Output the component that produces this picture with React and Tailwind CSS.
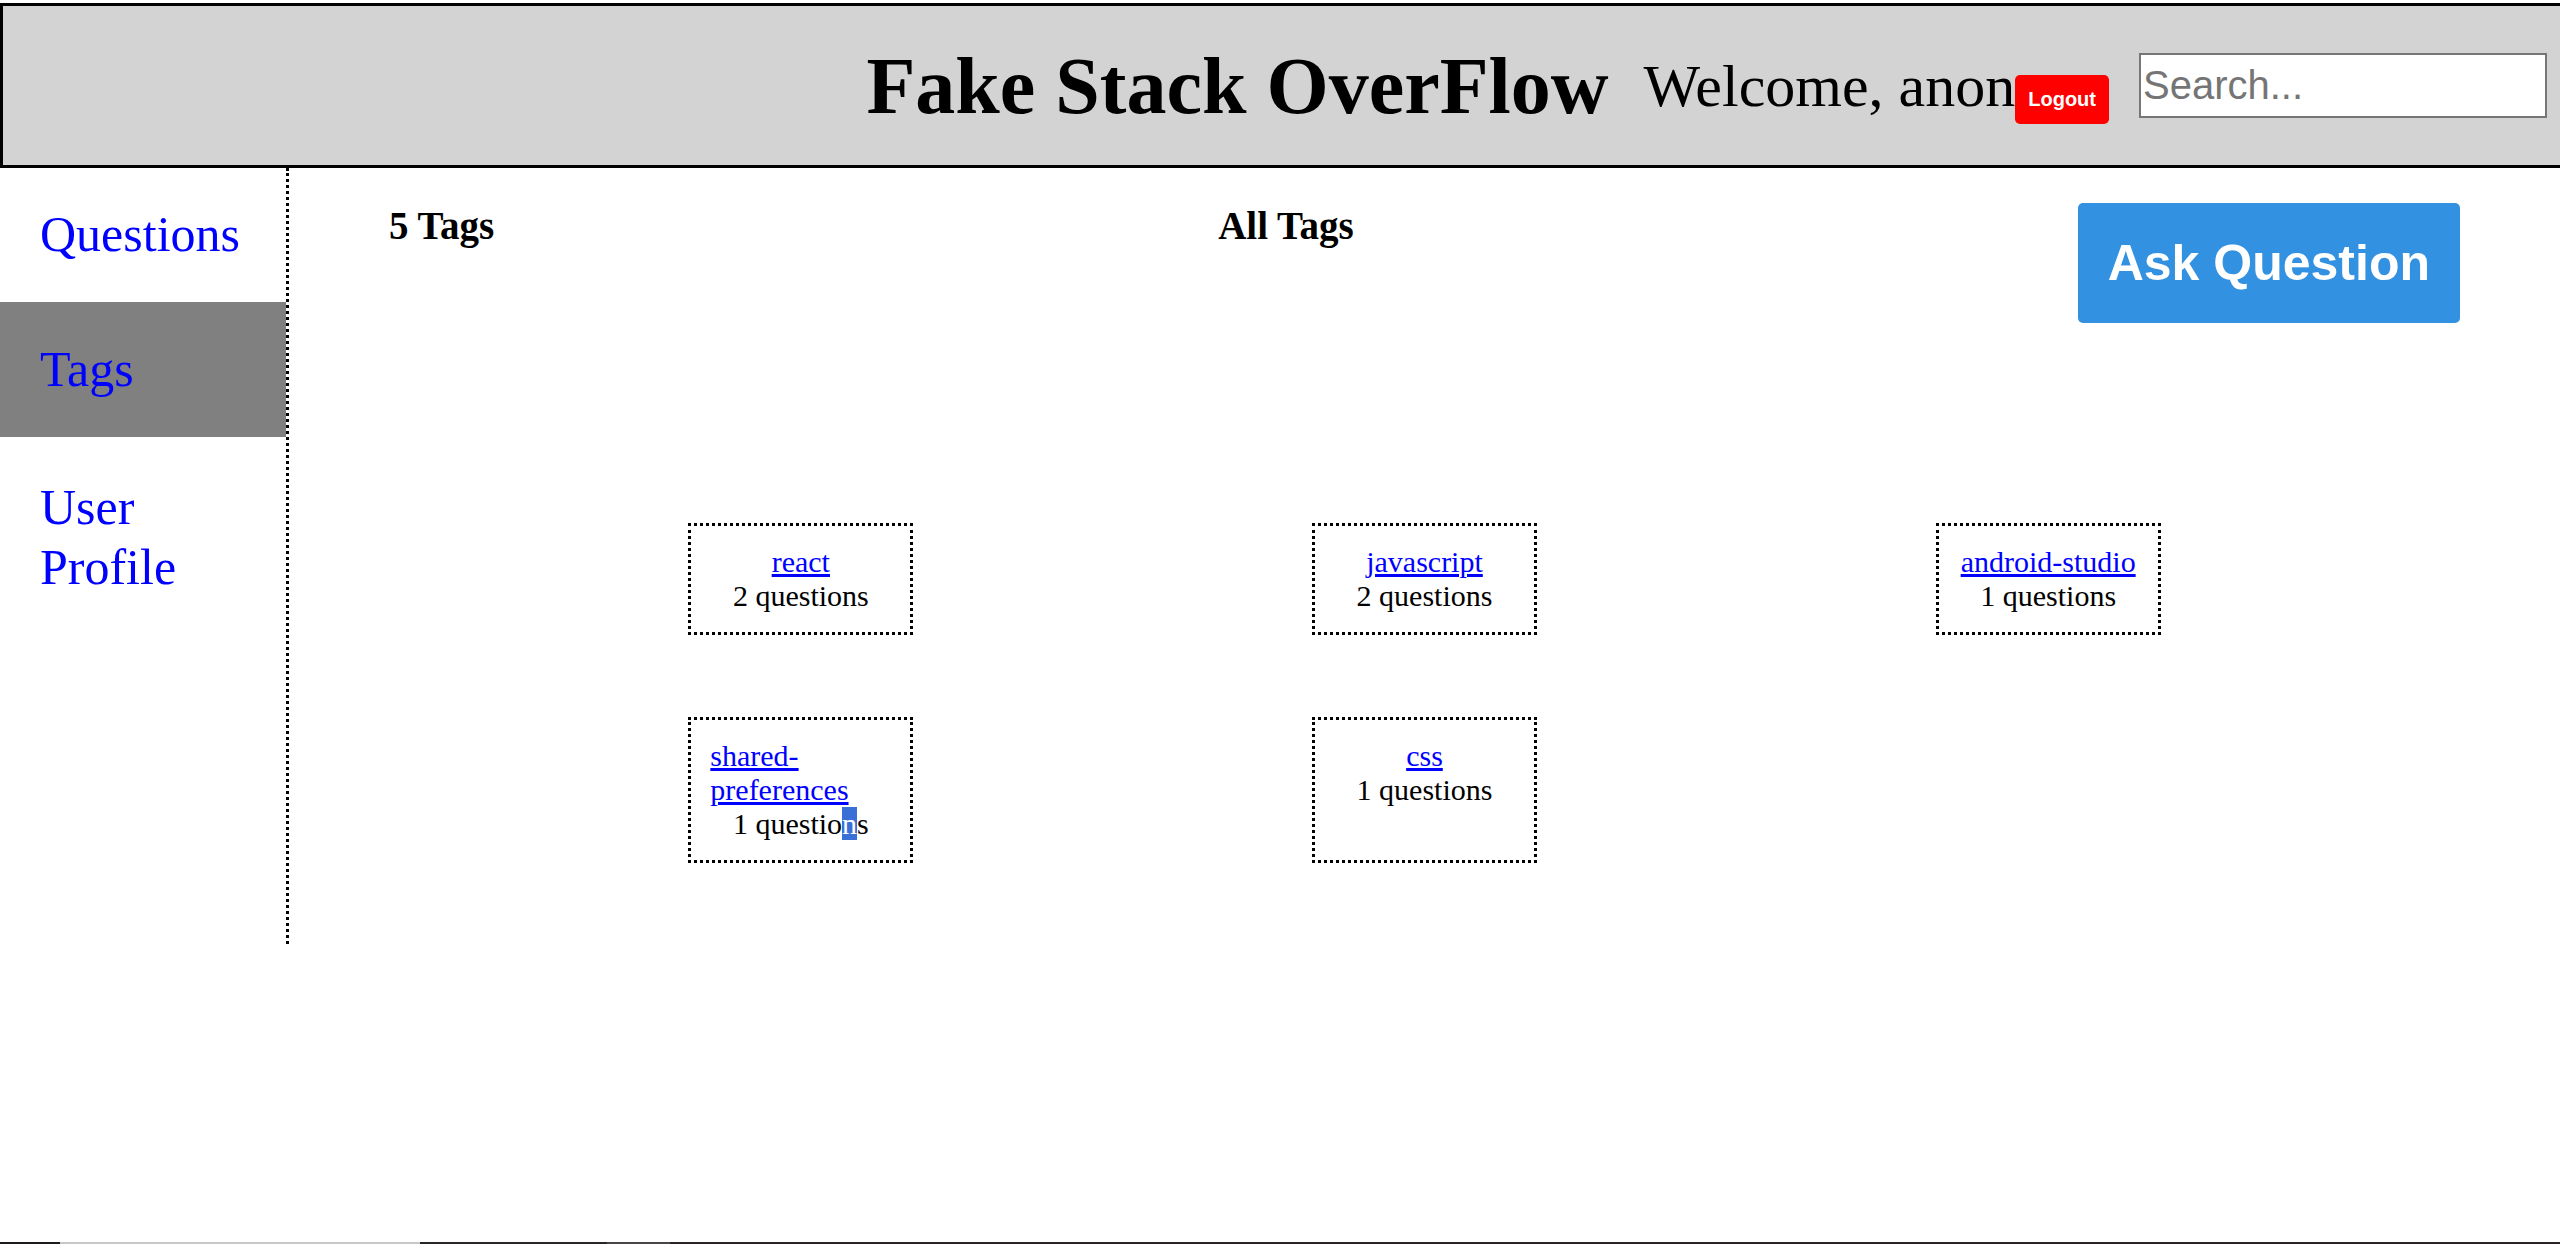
const tags = [
  { name: "react", count: 2 },
  { name: "javascript", count: 2 },
  { name: "android-studio", count: 1 },
  { name: "shared-preferences", count: 1, selected: true },
  { name: "css", count: 1 },
];

const navItems = [
  { label: "Questions", cls: "pt-[36px] pb-[38px]" },
  { label: "Tags", cls: "pt-[37px] pb-[38px] bg-[#808080]" },
  { label: "User Profile", cls: "pt-[40px] pb-[38px]" },
];

function Header() {
  return (
    <div className="mt-[3px] h-[165px] border-[3px] border-r-0 border-black bg-[#d3d3d3] flex items-center justify-end pr-[13px]">
      <h1 className="text-[80px] font-bold text-black mr-[35px] leading-none">Fake Stack OverFlow</h1>
      <div className="text-[60px] text-black whitespace-nowrap">
        Welcome, anon
        <button className="bg-[#ff0000] text-white font-['Liberation_Sans',Arial,sans-serif] font-bold text-[20px] leading-[23px] px-[13px] py-[13px] rounded-[5px] align-baseline">
          Logout
        </button>
      </div>
      <input
        type="text"
        placeholder="Search..."
        className="ml-[30px] w-[408px] h-[65px] bg-white border-2 border-[#767676] px-[2px] text-[40px] font-['Liberation_Sans',Arial,sans-serif] placeholder:text-[#757575] outline-none"
      />
    </div>
  );
}

function Sidebar() {
  return (
    <div className="w-[289px] h-[776px] shrink-0 border-r-[3px] border-dotted border-black">
      {navItems.map((item) => (
        <div
          key={item.label}
          className={`pl-[40px] pr-[40px] text-[50px] leading-[60px] text-[#0000ff] ${item.cls}`}
        >
          {item.label}
        </div>
      ))}
    </div>
  );
}

function TagCard({ tag }) {
  return (
    <div className="w-[225px] justify-self-center border-[3px] border-dotted border-black p-[19px] flex flex-col items-center text-[30px] leading-[34px]">
      <a href="#" className="text-[#0000ff] underline">{tag.name}</a>
      {tag.selected ? (
        <div className="text-black">
          {tag.count} questio<span className="bg-[#3a6fd8] text-white">n</span>s
        </div>
      ) : (
        <div className="text-black">{tag.count} questions</div>
      )}
    </div>
  );
}

export default function App() {
  return (
    <div className="min-h-screen flex flex-col overflow-hidden bg-white font-['Liberation_Serif','Times_New_Roman',serif]">
      <Header />
      <div className="flex">
        <Sidebar />
        <div className="flex-1">
          <div className="flex justify-between items-start px-[100px] pt-[35px]">
            <h2 className="text-[39px] font-bold leading-[46px]">5 Tags</h2>
            <h2 className="text-[39px] font-bold leading-[46px]">All Tags</h2>
            <button className="bg-[#3391e1] text-white font-['Liberation_Sans',Arial,sans-serif] font-bold text-[50px] leading-[58px] px-[30px] py-[31px] rounded-[5px]">
              Ask Question
            </button>
          </div>
          <div className="mt-[200px] px-[200px] grid grid-cols-3 gap-y-[82px]">
            {tags.map((t) => (
              <TagCard key={t.name} tag={t} />
            ))}
          </div>
        </div>
      </div>
      <div className="mt-auto h-[2px] flex">
        <div className="w-[60px] bg-[#1e1a1a]" />
        <div className="w-[360px] bg-[#c8c8c8]" />
        <div className="w-[187px] bg-[#2a2626]" />
        <div className="w-[63px] bg-[#4a4646]" />
        <div className="flex-1 bg-[#2a2424]" />
      </div>
    </div>
  );
}
